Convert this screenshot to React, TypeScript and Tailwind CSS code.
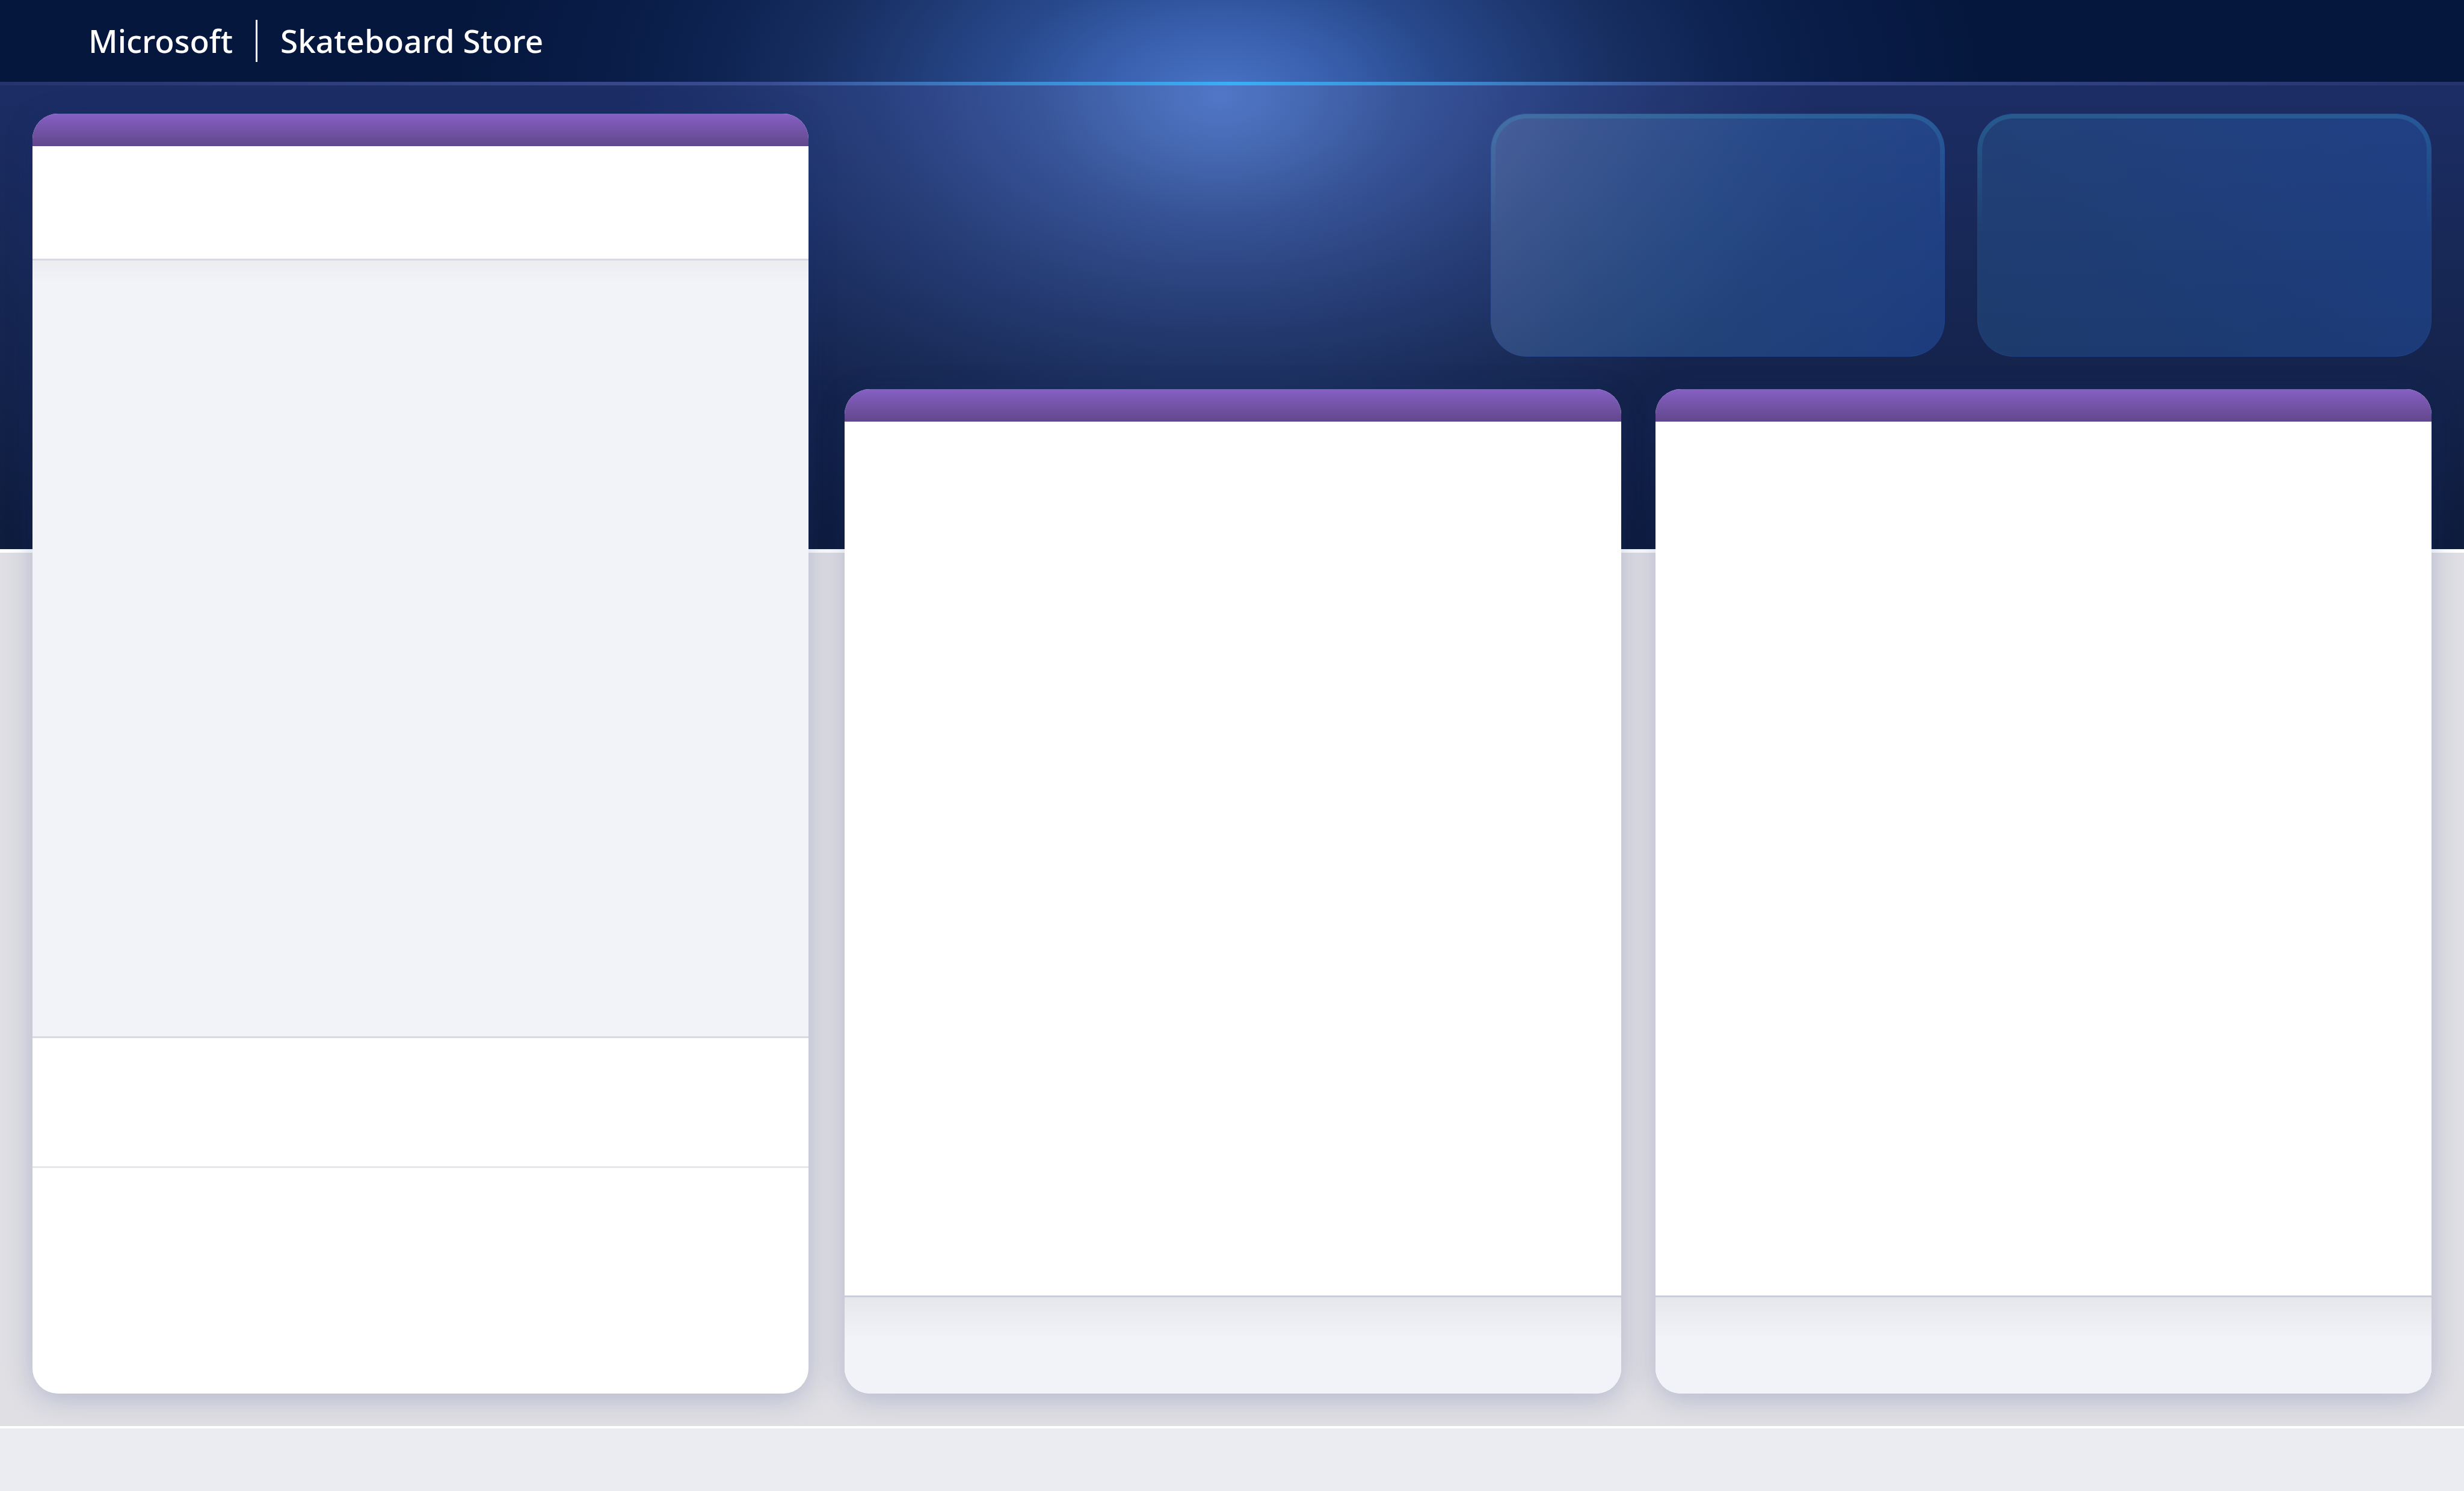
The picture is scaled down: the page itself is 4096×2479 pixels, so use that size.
const PANEL =
  "flex min-w-0 flex-col overflow-hidden rounded-[42px] bg-white shadow-[0_8px_48px_rgba(20,46,124,0.23)]";

function PanelBar() {
  return <div className="h-[54px] shrink-0 bg-linear-to-b from-[#8660c4] to-[#61478c]" />;
}

function TallPanel() {
  return (
    <section aria-label="Overview" className={PANEL}>
      <PanelBar />
      <div className="h-[187px] shrink-0 bg-white" />
      <div className="flex-1 border-y-3 border-[#d7dae5] bg-[#f2f3f8] bg-[linear-gradient(to_bottom,#ebecf0,#f2f3f8_36px)]" />
      <div className="h-[216px] shrink-0 border-b-3 border-[#e4e7ef]" />
      <div className="h-[375px] shrink-0" />
    </section>
  );
}

function Panel({ label }: { label: string }) {
  return (
    <section aria-label={label} className={`${PANEL} flex-1`}>
      <PanelBar />
      <div className="flex-1 bg-white" />
      <div className="h-[163px] shrink-0 border-t-2 border-[#c3c6d8] bg-[linear-gradient(to_bottom,#dcdde7_2px,#e6e7eb_2px,#f2f3f8_72px)]" />
    </section>
  );
}

function GlassTile({ label, bright }: { label: string; bright?: boolean }) {
  return (
    <section
      aria-label={label}
      className={`relative h-[404px] w-[755px] overflow-hidden rounded-[60px] ${
        bright
          ? "bg-[linear-gradient(118deg,rgba(124,146,192,0.31),rgba(62,122,194,0.37)_45%,rgba(38,96,200,0.38))]"
          : "bg-[linear-gradient(100deg,rgba(48,106,166,0.32),rgba(40,98,196,0.36))]"
      }`}
    >
      <div className="absolute inset-0 rounded-[60px] border-8 border-[#38a8c8]/26 [mask-image:linear-gradient(to_bottom,black,transparent_50%)]" />
      <div className="absolute inset-0 rounded-[60px] border border-[#2848a8]/40" />
    </section>
  );
}

export default function App() {
  return (
    <div className="flex min-h-screen flex-col bg-[#ebecf1] font-['Noto_Sans',sans-serif]">
      <header className="flex h-[142px] shrink-0 flex-col bg-[#05173c] bg-[radial-gradient(1290px_760px_at_49.5%_161px,#4a74c8_0%,#345aa5_19%,#294a8e_28%,#182f62_51%,#0d2250_67%,#081b45_83%,#05173c_100%)]">
        <div className="flex flex-1 items-center gap-[38px] pl-[147px] text-[53px] leading-[70px] font-medium text-white">
          <a href="#home">Microsoft</a>
          <span className="h-[70px] w-[3px] bg-white" />
          <h1>Skateboard Store</h1>
        </div>
        <div className="h-[6px] bg-[linear-gradient(to_right,#25346c,#3a4c92_31%,#3c89d0_41%,#3aaef8_50%,#3c89d0_59%,#3a4c92_69%,#25346c)]" />
      </header>

      <main className="grid flex-1 grid-cols-[1290fr_2637fr] gap-[60px] bg-[radial-gradient(990px_660px_at_49.5%_19px,rgba(88,130,212,0.87)_0%,rgba(88,130,212,0.71)_14%,rgba(86,128,212,0.49)_30%,rgba(84,124,210,0.34)_47%,rgba(80,120,206,0.25)_58%,rgba(76,116,200,0.17)_71%,rgba(72,112,196,0.11)_80%,rgba(72,112,196,0)_100%),linear-gradient(to_bottom,#1c2d65_0,#15254f_420px,#0e1c3d_771px,white_771px,white_777px,#e0dfe4_777px)] px-[54px] pt-[47px] pb-[54px]">
        <TallPanel />
        <div className="flex min-w-0 flex-col gap-[54px]">
          <div className="flex justify-end gap-[54px]">
            <GlassTile label="Featured tile" bright />
            <GlassTile label="Secondary tile" />
          </div>
          <div className="flex flex-1 gap-[57px]">
            <Panel label="Sales" />
            <Panel label="Inventory" />
          </div>
        </div>
      </main>

      <footer className="h-[108px] shrink-0 border-t-4 border-white" />
    </div>
  );
}
